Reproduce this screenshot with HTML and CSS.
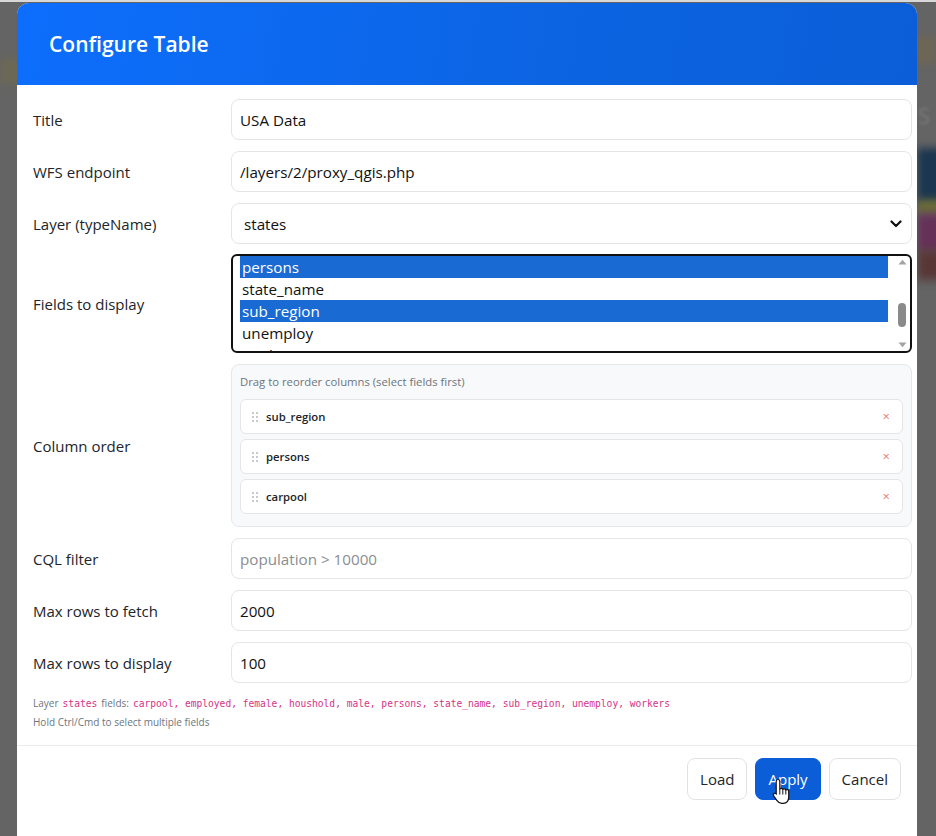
FILE: index.html
```html
<!DOCTYPE html>
<html>
<head>
<meta charset="utf-8">
<link rel="stylesheet" href="styles.css">
</head>
<body>
<div class="backdrop">
  <div class="bd-top"></div>
  <div class="bd-band-left"></div>
  <div class="bd-band-right"></div>
  <div class="bd-navy"></div>
  <div class="bd-yellow"></div>
  <div class="bd-magenta"></div>
  <div class="bd-brown"></div>
  <div class="bd-text1">S</div>
</div>
<div class="modal">
  <div class="modal-header">
    <h2 class="modal-title">Configure Table</h2>
  </div>
  <div class="modal-body">
    <div class="form-grid">
      <label class="lbl">Title</label>
      <div class="input">USA Data</div>

      <label class="lbl">WFS endpoint</label>
      <div class="input">/layers/2/proxy_qgis.php</div>

      <label class="lbl">Layer (typeName)</label>
      <div class="input select">
        <span>states</span>
        <svg class="chev" width="12" height="8" viewBox="0 0 12 8"><path d="M1.5 1.5 L6 6 L10.5 1.5" fill="none" stroke="#111" stroke-width="2.2" stroke-linecap="round" stroke-linejoin="round"/></svg>
      </div>

      <label class="lbl">Fields to display</label>
      <div class="listbox">
        <div class="list-inner">
          <div class="opt sel">persons</div>
          <div class="opt">state_name</div>
          <div class="opt sel">sub_region</div>
          <div class="opt">unemploy</div>
          <div class="opt">workers</div>
        </div>
        <div class="sbar">
          <svg class="sb-up" width="9" height="6" viewBox="0 0 9 6"><path d="M0.5 5.5 L4.5 0.8 L8.5 5.5 Z" fill="#a3a3a3"/></svg>
          <div class="sb-track"><div class="sb-thumb"></div></div>
          <svg class="sb-down" width="9" height="6" viewBox="0 0 9 6"><path d="M0.5 0.5 L4.5 5.2 L8.5 0.5 Z" fill="#a3a3a3"/></svg>
        </div>
      </div>

      <label class="lbl">Column order</label>
      <div class="order-box">
        <div class="order-hint">Drag to reorder columns (select fields first)</div>
        <div class="order-list">
          <div class="order-item">
            <span class="grip"><i></i><i></i><i></i><i></i><i></i><i></i></span>
            <span class="order-name">sub_region</span>
            <span class="order-x">×</span>
          </div>
          <div class="order-item">
            <span class="grip"><i></i><i></i><i></i><i></i><i></i><i></i></span>
            <span class="order-name">persons</span>
            <span class="order-x">×</span>
          </div>
          <div class="order-item">
            <span class="grip"><i></i><i></i><i></i><i></i><i></i><i></i></span>
            <span class="order-name">carpool</span>
            <span class="order-x">×</span>
          </div>
        </div>
      </div>

      <label class="lbl">CQL filter</label>
      <div class="input placeholder">population &gt; 10000</div>

      <label class="lbl">Max rows to fetch</label>
      <div class="input">2000</div>

      <label class="lbl">Max rows to display</label>
      <div class="input">100</div>
    </div>
    <div class="help">
      <div>Layer <code>states</code> fields: <code>carpool, employed, female, houshold, male, persons, state_name, sub_region, unemploy, workers</code></div>
      <div class="help2">Hold Ctrl/Cmd to select multiple fields</div>
    </div>
  </div>
  <div class="modal-footer">
    <button class="btn">Load</button>
    <button class="btn btn-primary">Apply</button>
    <button class="btn">Cancel</button>
  </div>
  <svg class="cursor" width="20" height="27" viewBox="0 0 20 27">
    <path d="M6 1.5 C7.2 1.5 7.8 2.3 7.8 3.4 L7.8 11 C8.3 10 10.4 10 10.8 11.4 C11.4 10.5 13.4 10.6 13.8 12 C14.4 11.3 16.5 11.4 16.7 13 L16.7 19 C16.7 22.5 14.8 25.3 11.2 25.3 L9.6 25.3 C7.4 25.3 6.2 24.4 5 22.7 L1.7 17.9 C1 16.8 1.4 15.6 2.5 15.3 C3.4 15.1 4 15.6 4.4 16.2 L4.2 16 L4.2 3.4 C4.2 2.3 4.8 1.5 6 1.5 Z" fill="#fff" stroke="#111" stroke-width="1.2" stroke-linejoin="round"/>
    <path d="M10.8 11.4 L10.8 16.5 M13.8 12 L13.8 16.5 M7.8 11 L7.8 16.5" stroke="#111" stroke-width="1" fill="none"/>
  </svg>
</div>
</body>
</html>
```
FILE: styles.css
```css
* { box-sizing: border-box; }
html, body { margin: 0; padding: 0; }
body {
  background: #646464;
  width: 936px;
  height: 836px;
  overflow: hidden;
  position: relative;
  font-family: "Open Sans", "Noto Sans", sans-serif;
  color: #212529;
}
.backdrop { position: absolute; inset: 0; z-index: 0; }
.bd-top { position: absolute; left: 0; right: 0; top: 0; height: 2px; background: #d8d8d8; }
.bd-band-left { position: absolute; left: 0; top: 58px; width: 30px; height: 26px; background: #6b6856; filter: blur(3px); }
.bd-band-right { position: absolute; right: 0; top: 36px; width: 30px; height: 28px; background: #6d6656; filter: blur(3px); }
.bd-navy { position: absolute; left: 917px; top: 148px; width: 40px; height: 56px; background: #1b3650; filter: blur(4px); }
.bd-yellow { position: absolute; left: 917px; top: 200px; width: 40px; height: 14px; background: #6c6d35; filter: blur(4px); }
.bd-magenta { position: absolute; left: 917px; top: 214px; width: 40px; height: 38px; background: #663159; filter: blur(4px); }
.bd-brown { position: absolute; left: 917px; top: 250px; width: 30px; height: 30px; background: #583636; filter: blur(5px); }
.bd-text1 { position: absolute; left: 918px; top: 100px; font-size: 22px; color: #7a7a7a; filter: blur(1.5px); }

.modal {
  position: relative;
  z-index: 1;
  margin: 3px 0 0 17px;
  width: 900px;
  height: 900px;
  background: #fff;
  border-radius: 12px 12px 0 0;
  overflow: hidden;
}
.modal-header {
  height: 82px;
  background: linear-gradient(100deg, #0d6efd 0%, #0c64e2 60%, #0b5ed7 100%);
  display: flex;
  align-items: center;
  padding: 0 32px;
}
.modal-title {
  margin: 0;
  color: #fff;
  font-size: 21px;
  font-weight: 600;
}
.modal-body {
  padding: 14px 5px 14px 16px;
}
.form-grid {
  display: grid;
  grid-template-columns: 198px 1fr;
  row-gap: 11px;
  align-items: center;
}
.lbl {
  font-size: 15px;
  color: #212529;
}
.input {
  height: 41px;
  border: 1px solid #e3e5e8;
  border-radius: 8px;
  padding: 0 8px;
  display: flex;
  align-items: center;
  font-size: 15.2px;
  color: #111;
}
.input.placeholder { color: #8a8d91; }
.input.select { padding-left: 12px; justify-content: space-between; padding-right: 9px; }
.chev { display: block; }

.listbox {
  height: 99px;
  margin-top: -1px;
  border: 2px solid #111;
  border-radius: 6px;
  position: relative;
  overflow: hidden;
  display: flex;
}
.list-inner {
  flex: 1;
  padding: 0 7px 0 7px;
}
.opt {
  height: 22px;
  line-height: 22px;
  font-size: 15.2px;
  padding-left: 2px;
  color: #111;
}
.opt.sel { background: #1a6ad4; color: #fff; }
.sbar {
  width: 14px;
  display: flex;
  flex-direction: column;
  align-items: center;
  padding: 3px 0 3px;
  margin-right: 1px;
}
.sb-track { flex: 1; width: 100%; position: relative; }
.sb-thumb {
  position: absolute;
  left: 3px; width: 8px;
  top: 38px; height: 24px;
  background: #8a8a8a;
  border-radius: 4px;
}
.sb-up, .sb-down { display: block; }

.order-box {
  background: #f8f9fa;
  border: 1px solid #e5e7eb;
  border-radius: 8px;
  padding: 9px 8px 12px;
}
.order-hint {
  font-size: 11.3px;
  color: #6c757d;
  margin-bottom: 10px;
  line-height: 15px;
}
.order-list { display: flex; flex-direction: column; gap: 5px; }
.order-item {
  height: 35px;
  background: #fff;
  border: 1px solid #e3e5e8;
  border-radius: 6px;
  display: flex;
  align-items: center;
  padding: 0 12px 0 11px;
}
.grip {
  width: 6px;
  display: grid;
  grid-template-columns: 2px 2px;
  column-gap: 2px;
  row-gap: 2px;
  margin-right: 8px;
}
.grip i { width: 2px; height: 2px; background: #b3b8bd; border-radius: 1px; display: block; }
.order-name { font-size: 11.3px; font-weight: 600; color: #212529; flex: 1; }
.order-x { color: #ee7c7c; font-size: 13px; line-height: 1; }

.help {
  margin-top: 11px;
  font-size: 10px;
  color: #6c757d;
  line-height: 18px;
}
.help code {
  font-family: "DejaVu Sans Mono", "Liberation Mono", monospace;
  color: #d63384;
  font-size: 9.6px;
  margin: 0 1.5px;
}
.help2 { margin-top: 0; }

.modal-footer {
  border-top: 1px solid #e9ecef;
  padding: 12px 16px;
  display: flex;
  justify-content: flex-end;
  gap: 8px;
}
.btn {
  height: 42px;
  padding: 0 12px;
  border: 1px solid #e0e3e6;
  border-radius: 8px;
  background: #fff;
  font-family: "Open Sans", "Noto Sans", sans-serif;
  font-size: 15px;
  color: #212529;
}
.btn-primary {
  background: #0b5ed7;
  border-color: #0b5ed7;
  color: #fff;
}
.cursor {
  position: absolute;
  left: 755px;
  top: 775px;
}
```
